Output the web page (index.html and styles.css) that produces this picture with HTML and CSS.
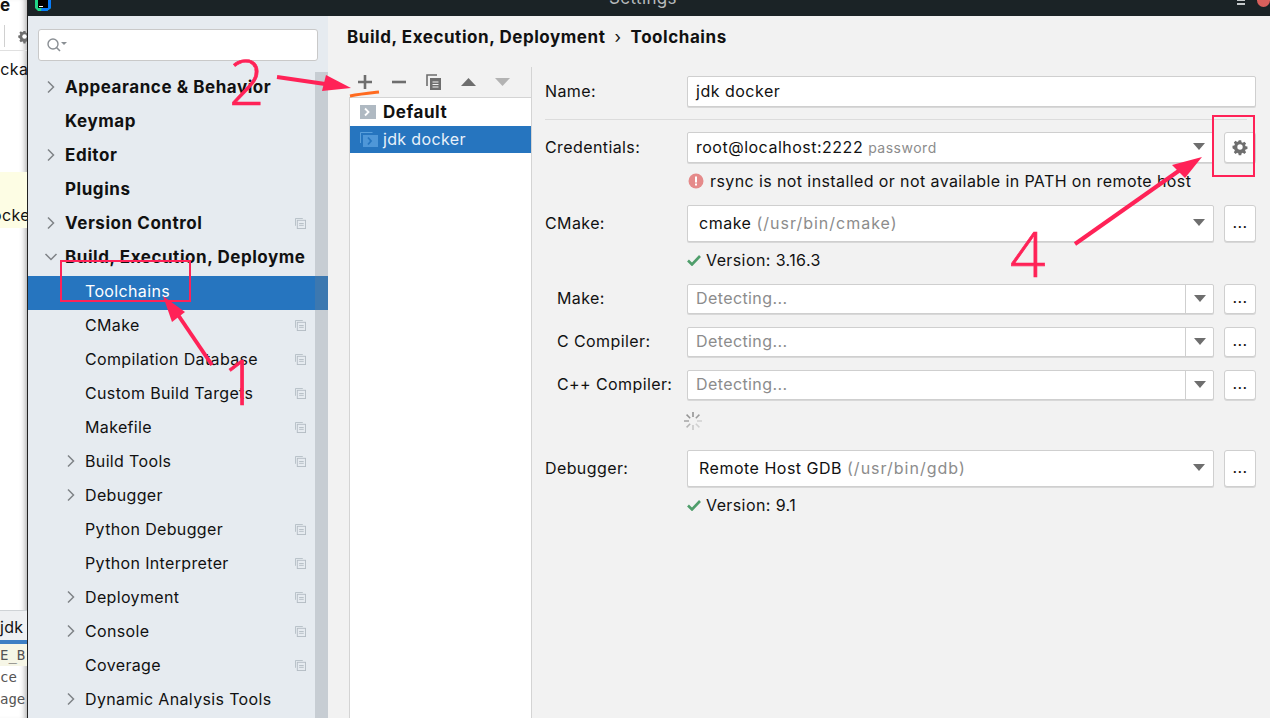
FILE: index.html
```html
<!DOCTYPE html>
<html>
<head>
  <title>Settings</title>
  <link rel="stylesheet" href="styles.css">
</head>
<body>
<svg class="defs" width="0" height="0">
  <symbol id="i-project" viewBox="0 0 12 12">
    <path d="M.5 8.5V.5h8" fill="none" stroke="#b4bcc4"/>
    <rect x="2.5" y="2.5" width="9" height="9" fill="#e6ebf0" stroke="#b4bcc4"/>
    <path d="M4.5 6h5M4.5 8h5" stroke="#b4bcc4"/>
  </symbol>
  <symbol id="i-right" viewBox="0 0 10 14"><path d="M2 1.5 7.5 7 2 12.5" fill="none" stroke="#7f8387" stroke-width="1.5"/></symbol>
  <symbol id="i-down" viewBox="0 0 14 10"><path d="M1.5 2 7 7.5 12.5 2" fill="none" stroke="#7f8387" stroke-width="1.5"/></symbol>
  <symbol id="i-caret" viewBox="0 0 12 7"><path d="M0 0h12L6 7z" fill="#6e6e6e"/></symbol>
  <symbol id="i-check" viewBox="0 0 14 12"><path d="M1 6.500 5 10.500 13 2" fill="none" stroke="#4f9e6b" stroke-width="2.600"/></symbol>
  <symbol id="i-gear" viewBox="0 0 18 18">
    <path d="M7.500 1h3l.4 2.200 1.500.7 1.900-1.300 2.100 2.100-1.300 1.900.7 1.500 2.200.4v3l-2.200.4-.7 1.500 1.300 1.900-2.100 2.100-1.900-1.300-1.500.7-.4 2.200h-3l-.4-2.200-1.500-.7-1.900 1.300-2.100-2.100 1.300-1.900-.7-1.500L0 10.500v-3l2.200-.4.7-1.500L1.600 3.700l2.100-2.100 1.900 1.300 1.500-.7z" fill="#6e6e6e" transform="translate(1.500 1.500) scale(.83)"/>
    <circle cx="9" cy="9" r="2.700" fill="#fff"/>
  </symbol>
</svg>

<div class="screen">
  <div class="behind">
    <div class="behind-top">e</div>
    <div class="behind-bar">
      <span class="bar-sep"></span>
      <svg class="bar-gear" width="15" height="15"><use href="#i-gear"/></svg>
    </div>
    <div class="behind-line">acka</div>
    <div class="behind-note">ocke</div>
    <div class="behind-tab">jdk</div>
    <div class="behind-code code-hl">E_B</div>
    <div class="behind-code">ce</div>
    <div class="behind-code">age</div>
  </div>

  <div class="dialog">
    <div class="titlebar">
      <svg class="app-logo" width="16" height="11" viewBox="0 0 16 11">
        <path d="M0 0h16v8l-4 3H3L0 8z" fill="#21d789"/>
        <path d="M8 0h8v8l-4 3H6z" fill="#087cfa"/>
        <rect x="3" y="0" width="10" height="8" fill="#000"/>
        <rect x="4" y="6" width="4" height="1" fill="#fff"/>
      </svg>
      <span class="title-text">Settings</span>
      <svg class="title-min" width="8" height="6" viewBox="0 0 8 6"><path d="M0 0h8v1H0zM0 3h8v2H0z" fill="#c5c9cb"/></svg>
      <span class="title-close"></span>
    </div>

    <div class="dialog-body">
      <div class="sidebar">
        <div class="search">
          <svg width="22" height="16" viewBox="0 0 22 16">
            <circle cx="7" cy="7" r="5" fill="none" stroke="#8a8f94" stroke-width="1.4"/>
            <path d="M10.500 10.500 14 14" stroke="#8a8f94" stroke-width="1.600"/>
            <path d="M15 5h6l-3 3z" fill="#8a8f94"/>
          </svg>
        </div>
        <div class="tree">
          <div class="row top"><svg class="chev"><use href="#i-right"/></svg><span class="label">Appearance &amp; Behavior</span></div>
          <div class="row top"><span class="chev"></span><span class="label">Keymap</span></div>
          <div class="row top"><svg class="chev"><use href="#i-right"/></svg><span class="label">Editor</span></div>
          <div class="row top"><span class="chev"></span><span class="label">Plugins</span></div>
          <div class="row top"><svg class="chev"><use href="#i-right"/></svg><span class="label">Version Control</span><svg class="proj"><use href="#i-project"/></svg></div>
          <div class="row top"><svg class="chev"><use href="#i-down"/></svg><span class="label">Build, Execution, Deployment</span></div>
          <div class="row sub selected"><span class="chev"></span><span class="label">Toolchains</span></div>
          <div class="row sub"><span class="chev"></span><span class="label">CMake</span><svg class="proj"><use href="#i-project"/></svg></div>
          <div class="row sub"><span class="chev"></span><span class="label">Compilation Database</span><svg class="proj"><use href="#i-project"/></svg></div>
          <div class="row sub"><span class="chev"></span><span class="label">Custom Build Targets</span><svg class="proj"><use href="#i-project"/></svg></div>
          <div class="row sub"><span class="chev"></span><span class="label">Makefile</span><svg class="proj"><use href="#i-project"/></svg></div>
          <div class="row sub"><svg class="chev"><use href="#i-right"/></svg><span class="label">Build Tools</span><svg class="proj"><use href="#i-project"/></svg></div>
          <div class="row sub"><svg class="chev"><use href="#i-right"/></svg><span class="label">Debugger</span></div>
          <div class="row sub"><span class="chev"></span><span class="label">Python Debugger</span><svg class="proj"><use href="#i-project"/></svg></div>
          <div class="row sub"><span class="chev"></span><span class="label">Python Interpreter</span><svg class="proj"><use href="#i-project"/></svg></div>
          <div class="row sub"><svg class="chev"><use href="#i-right"/></svg><span class="label">Deployment</span><svg class="proj"><use href="#i-project"/></svg></div>
          <div class="row sub"><svg class="chev"><use href="#i-right"/></svg><span class="label">Console</span><svg class="proj"><use href="#i-project"/></svg></div>
          <div class="row sub"><span class="chev"></span><span class="label">Coverage</span><svg class="proj"><use href="#i-project"/></svg></div>
          <div class="row sub"><svg class="chev"><use href="#i-right"/></svg><span class="label">Dynamic Analysis Tools</span></div>
          <div class="scrollbar"></div>
        </div>
      </div>

      <div class="content">
        <div class="crumbs"><span>Build, Execution, Deployment</span><span class="crumb-sep">›</span><span>Toolchains</span></div>
        <div class="panes">
          <div class="list-pane">
            <div class="list-tools">
              <svg width="14" height="14" viewBox="0 0 14 14"><path d="M5.700 0h2.600v5.700H14v2.600H8.300V14H5.700V8.300H0V5.700h5.700z" fill="#6e6e6e"/></svg>
              <svg width="14" height="14" viewBox="0 0 14 14"><path d="M0 5.700h14v2.600H0z" fill="#6e6e6e"/></svg>
              <svg width="16" height="16" viewBox="0 0 16 16">
                <path d="M1 12V1h10" fill="none" stroke="#6e6e6e" stroke-width="1.600"/>
                <path d="M4 4h11v12H4z" fill="#6e6e6e"/>
                <path d="M6.500 8h6M6.500 10.500h6M6.500 13h6" stroke="#f2f2f2"/>
              </svg>
              <svg width="15" height="8" viewBox="0 0 15 8"><path d="M0 8h15L7.500 0z" fill="#6e6e6e"/></svg>
              <svg width="15" height="8" viewBox="0 0 15 8"><path d="M0 0h15L7.500 8z" fill="#b3b3b3"/></svg>
            </div>
            <div class="list">
              <div class="list-row strong">
                <svg width="16" height="14" viewBox="0 0 16 14"><rect width="16" height="14" fill="#afb9c2"/><path d="M5 3.500 8.500 7 5 10.500" fill="none" stroke="#fff" stroke-width="1.800"/></svg>
                Default
              </div>
              <div class="list-row active">
                <svg width="18" height="15" viewBox="0 0 18 15">
                  <path d="M.5 11V.5h12" fill="none" stroke="#5aa0dc"/>
                  <rect x="3" y="3" width="15" height="12" fill="#4f97d8"/>
                  <path d="M8 5.500 11 9 8 12.500" fill="none" stroke="#2675bf" stroke-width="1.800"/>
                </svg>
                jdk docker
              </div>
            </div>
          </div>

          <div class="form">
            <div class="field name-field">
              <label class="field-label">Name:</label>
              <div class="box grow"><span>jdk docker</span></div>
            </div>
            <div class="sep"></div>
            <div class="field cred-field">
              <label class="field-label">Credentials:</label>
              <div class="box grow"><span>root@localhost:2222</span><span class="hint small">password</span><svg class="caret"><use href="#i-caret"/></svg></div>
              <div class="side-btn"><svg width="18" height="18"><use href="#i-gear"/></svg></div>
            </div>
            <div class="status error-line">
              <svg width="16" height="16" viewBox="0 0 16 16"><circle cx="8" cy="8" r="7.500" fill="#e58a8a"/><path d="M7 3.500h2v6H7zM7 10.500h2v2H7z" fill="#fff"/></svg>
              rsync is not installed or not available in PATH on remote host
            </div>
            <div class="field tall cmake-field">
              <label class="field-label">CMake:</label>
              <div class="box grow combo"><span>cmake</span><span class="hint">(/usr/bin/cmake)</span><svg class="caret"><use href="#i-caret"/></svg></div>
              <div class="side-btn dots">...</div>
            </div>
            <div class="status ok-line"><svg width="14" height="12"><use href="#i-check"/></svg>Version: 3.16.3</div>
            <div class="field short inset first-short">
              <label class="field-label">Make:</label>
              <div class="box grow split"><span class="hint none">Detecting...</span><span class="split-arrow"><svg class="caret"><use href="#i-caret"/></svg></span></div>
              <div class="side-btn dots">...</div>
            </div>
            <div class="field short inset">
              <label class="field-label">C Compiler:</label>
              <div class="box grow split"><span class="hint none">Detecting...</span><span class="split-arrow"><svg class="caret"><use href="#i-caret"/></svg></span></div>
              <div class="side-btn dots">...</div>
            </div>
            <div class="field short inset">
              <label class="field-label">C++ Compiler:</label>
              <div class="box grow split"><span class="hint none">Detecting...</span><span class="split-arrow"><svg class="caret"><use href="#i-caret"/></svg></span></div>
              <div class="side-btn dots">...</div>
            </div>
            <svg class="spinner" width="18" height="18" viewBox="0 0 18 18" fill="none" stroke-width="1.500">
              <path d="M9 0v5" stroke="#8c8c8c"/>
              <path d="M15.400 2.600 11.800 6.200" stroke="#9c9c9c"/>
              <path d="M18 9h-5" stroke="#d0d0d0"/>
              <path d="M15.400 15.400 11.800 11.800" stroke="#d0d0d0"/>
              <path d="M9 18v-5" stroke="#c4c4c4"/>
              <path d="M2.600 15.400 6.200 11.800" stroke="#b4b4b4"/>
              <path d="M0 9h5" stroke="#a4a4a4"/>
              <path d="M2.600 2.600 6.200 6.200" stroke="#949494"/>
            </svg>
            <div class="field tall debugger-field">
              <label class="field-label">Debugger:</label>
              <div class="box grow combo"><span>Remote Host GDB</span><span class="hint">(/usr/bin/gdb)</span><svg class="caret"><use href="#i-caret"/></svg></div>
              <div class="side-btn dots">...</div>
            </div>
            <div class="status ok-line"><svg width="14" height="12"><use href="#i-check"/></svg>Version: 9.1</div>
          </div>
        </div>
      </div>
    </div>
  </div>

  <!-- hand drawn notes on top of the screenshot -->
  <svg class="marks" width="1270" height="718" viewBox="0 0 1270 718">
    <g class="mark-line">
      <path d="M277 77 332 85"/>
      <path d="M212 365 172 306"/>
      <path d="M1075 244 1180 170"/>
    </g>
    <path class="mark-fill" d="M351 88 322 91 326 75z"/>
    <path class="mark-fill" d="M163 296 185 312 172 322z"/>
    <path class="mark-fill" d="M1202 157 1172 165 1185 178z"/>
    <rect class="mark-box" x="61" y="261" width="129" height="40"/>
    <rect class="mark-box" x="1213" y="116" width="41" height="60"/>
    <path class="mark-under" d="M350 96C360 94 370 93 379 92"/>
    <text class="mark-num" x="229" y="105">2</text>
    <text class="mark-num" x="223" y="405">1</text>
    <text class="mark-num" x="1010" y="277">4</text>
  </svg>
</div>
</body>
</html>
```

FILE: styles.css
```css
html, body {
  margin: 0;
  padding: 0;
}
body {
  width: 1270px;
  height: 718px;
  overflow: hidden;
  font-family: Inter, "Noto Sans", sans-serif;
  font-size: 16px;
  letter-spacing: .35px;
  color: #111;
}
.defs {
  display: none;
}
.screen {
  position: relative;
  display: flex;
  width: 1270px;
  height: 718px;
  overflow: hidden;
  background: #fff;
}

/* the window behind the dialog */
.behind {
  width: 27px;
  flex: none;
  overflow: hidden;
  white-space: nowrap;
  box-shadow: inset -6px 0 6px -5px #999;
}
.behind-top {
  height: 22px;
  font-weight: bold;
  font-size: 17px;
  line-height: 10px;
}
.behind-bar {
  display: flex;
  align-items: center;
  gap: 12px;
  height: 28px;
  padding-left: 4px;
  border-bottom: 1px solid #e0e0e0;
}
.bar-sep {
  width: 1px;
  height: 22px;
  background: #d0d0d0;
}
.bar-gear {
  flex: none;
  margin-right: -8px;
}
.behind-line {
  margin-left: -9px;
  margin-top: 8px;
  height: 113px;
}
.behind-note {
  height: 56px;
  margin-left: -8px;
  padding-top: 33px;
  box-sizing: border-box;
  background: #fdfde4;
}
.behind-tab {
  margin-top: 382px;
  height: 34px;
  line-height: 32px;
  border-top: 1px solid #cfd3d6;
  border-bottom: 4px solid #3d7fc4;
  background: #eef0f2;
  box-sizing: border-box;
}
.behind-code {
  height: 22px;
  line-height: 22px;
  font-family: "DejaVu Sans Mono", monospace;
  font-size: 14px;
  letter-spacing: 0;
  color: #555;
}
.code-hl {
  background: #f6f6e6;
}

/* dialog */
.dialog {
  flex: 1;
  display: flex;
  flex-direction: column;
  min-width: 0;
  border-left: 1px solid #222;
}
.titlebar {
  position: relative;
  flex: none;
  height: 16px;
  background: #1b2326;
  overflow: hidden;
}
.app-logo {
  position: absolute;
  left: 7px;
  top: 0;
}
.title-text {
  position: absolute;
  left: 581px;
  top: -12px;
  font-size: 17px;
  color: #b6babc;
}
.title-min {
  position: absolute;
  left: 1209px;
  top: 0;
}
.title-close {
  position: absolute;
  left: 1229px;
  top: -6px;
  width: 13px;
  height: 13px;
  border-radius: 50%;
  background: #d9605c;
}
.dialog-body {
  flex: 1;
  display: flex;
  min-height: 0;
}

/* left tree */
.sidebar {
  width: 300px;
  flex: none;
  background: #e6ebf0;
  overflow: hidden;
}
.search {
  display: flex;
  align-items: center;
  box-sizing: border-box;
  height: 32px;
  margin: 13px 10px 0;
  padding-left: 7px;
  background: #fff;
  border: 1px solid #c9c9c9;
  border-radius: 3px;
}
.tree {
  position: relative;
  margin-top: 11px;
}
.row {
  display: flex;
  align-items: center;
  box-sizing: border-box;
  height: 34px;
  padding-bottom: 4px;
  white-space: nowrap;
}
.row .chev {
  flex: none;
  width: 14px;
  height: 14px;
  margin-right: 7px;
}
.row.top {
  padding-left: 16px;
  font-size: 17px;
  font-weight: 700;
  letter-spacing: .55px;
}
.row.sub {
  padding-left: 36px;
}
.label {
  flex: 1;
  min-width: 0;
  overflow: hidden;
  margin-right: 22px;
}
.proj {
  flex: none;
  width: 11px;
  height: 11px;
  margin: 0 22px 0 -11px;
}
.row .label:has(+ .proj) {
  margin-right: 0;
}
.row.selected {
  background: #2675bf;
  color: #fff;
}
.scrollbar {
  position: absolute;
  top: 0;
  right: 0;
  bottom: 0;
  width: 13px;
  background: rgba(120, 128, 136, .28);
}

/* right side */
.content {
  flex: 1;
  display: flex;
  flex-direction: column;
  min-width: 0;
  background: #f2f2f2;
}
.crumbs {
  display: flex;
  gap: 9px;
  padding: 10px 0 0 19px;
  font-size: 17px;
  font-weight: 700;
  letter-spacing: .55px;
  line-height: 22px;
}
.crumb-sep {
  font-weight: 400;
}
.panes {
  flex: 1;
  display: flex;
  min-height: 0;
  margin-top: 19px;
}
.list-pane {
  width: 182px;
  margin-left: 21px;
  flex: none;
  display: flex;
  flex-direction: column;
  border-right: 1px solid #d4d4d4;
}
.list-tools {
  display: flex;
  align-items: center;
  gap: 20px;
  height: 30px;
  padding-left: 9px;
  flex: none;
}
.list-tools svg:nth-child(n+4) {
  margin-left: -1px;
}
.list {
  flex: 1;
  background: #fff;
  border-top: 1px solid #d4d4d4;
  border-left: 1px solid #d4d4d4;
}
.list-row {
  display: flex;
  align-items: center;
  gap: 6px;
  height: 27.500px;
  padding-left: 10px;
}
.list-row.strong {
  font-size: 17px;
  font-weight: 700;
  letter-spacing: .55px;
  gap: 7px;
}
.list-row.active {
  background: #2675bf;
  color: #e8f1fa;
  gap: 5px;
}

.form {
  flex: 1;
  min-width: 0;
  padding: 9px 14px 0 13px;
  letter-spacing: .4px;
}
.field {
  display: flex;
  align-items: center;
  gap: 10px;
}
.field-label {
  flex: none;
  width: 132px;
  padding-bottom: 2px;
}
.box {
  display: flex;
  align-items: center;
  gap: 5px;
  box-sizing: border-box;
  padding: 0 0 2px 8px;
  background: #fff;
  border: 1px solid #cfcfcf;
  box-shadow: 0 1px 0 #d8d8d8;
  border-radius: 2px;
  white-space: nowrap;
  letter-spacing: .5px;
}
.grow {
  flex: 1;
  min-width: 0;
}
.hint {
  color: #8c8c8c;
}
.combo .hint {
  letter-spacing: 1px;
}
.hint.small {
  font-size: 14px;
  margin-top: 1px;
}
.hint.none {
  flex: 1;
  letter-spacing: .4px;
}
.caret {
  width: 12px;
  height: 7px;
  margin-left: auto;
  margin-right: 8px;
  flex: none;
}
.side-btn {
  flex: none;
  display: flex;
  align-items: center;
  justify-content: center;
  box-sizing: border-box;
  width: 32px;
  padding-bottom: 2px;
  align-self: stretch;
  background: #fff;
  border: 1px solid #cfcfcf;
  box-shadow: 0 1px 0 #d8d8d8;
  border-radius: 3px;
}
.name-field {
  height: 31px;
}
.name-field .box,
.cred-field .box,
.tall .box,
.short .box {
  align-self: stretch;
}
.sep {
  height: 1px;
  margin: 12px 9px 12px 0;
  background: #dcdcdc;
}
.cred-field {
  height: 31px;
}
.status {
  display: flex;
  align-items: center;
  gap: 5px;
  box-sizing: border-box;
  padding: 0 0 2px 142px;
  height: 24px;
}
.error-line {
  margin-top: 7px;
  gap: 6px;
  padding-left: 143px;
}
.tall {
  height: 37px;
}
.tall .box {
  padding-left: 11px;
}
.cmake-field {
  margin-top: 11px;
}
.ok-line {
  margin-top: 7px;
}
.short {
  height: 30px;
  margin-top: 13px;
}
.first-short {
  margin-top: 11px;
}
.inset .field-label {
  width: 120px;
  padding-left: 12px;
}
.split {
  padding-right: 0;
}
.split-arrow {
  display: flex;
  align-items: center;
  align-self: stretch;
  box-sizing: border-box;
  width: 28px;
  margin-bottom: -2px;
  padding-bottom: 2px;
  border-left: 1px solid #cfcfcf;
  flex: none;
}
.split-arrow .caret {
  margin: 0 auto;
}
.dots {
  font-size: 16px;
  padding-bottom: 4px;
}
.spinner {
  display: block;
  margin: 12px 0 0 139px;
}
.debugger-field {
  margin-top: 20px;
}

/* annotations */
.marks {
  position: absolute;
  left: 0;
  top: 0;
  pointer-events: none;
}
.mark-line {
  fill: none;
  stroke: #ff2257;
  stroke-width: 4;
}
.mark-fill {
  fill: #ff2257;
}
.mark-box {
  fill: none;
  stroke: #ff2257;
  stroke-width: 2;
}
.mark-under {
  fill: none;
  stroke: #ff6a1f;
  stroke-width: 3;
}
.mark-num {
  font-family: "Open Sans", sans-serif;
  font-weight: 300;
  font-size: 62px;
  letter-spacing: 0;
  fill: #ff2257;
  stroke: #ff2257;
  stroke-width: .7;
}
```
